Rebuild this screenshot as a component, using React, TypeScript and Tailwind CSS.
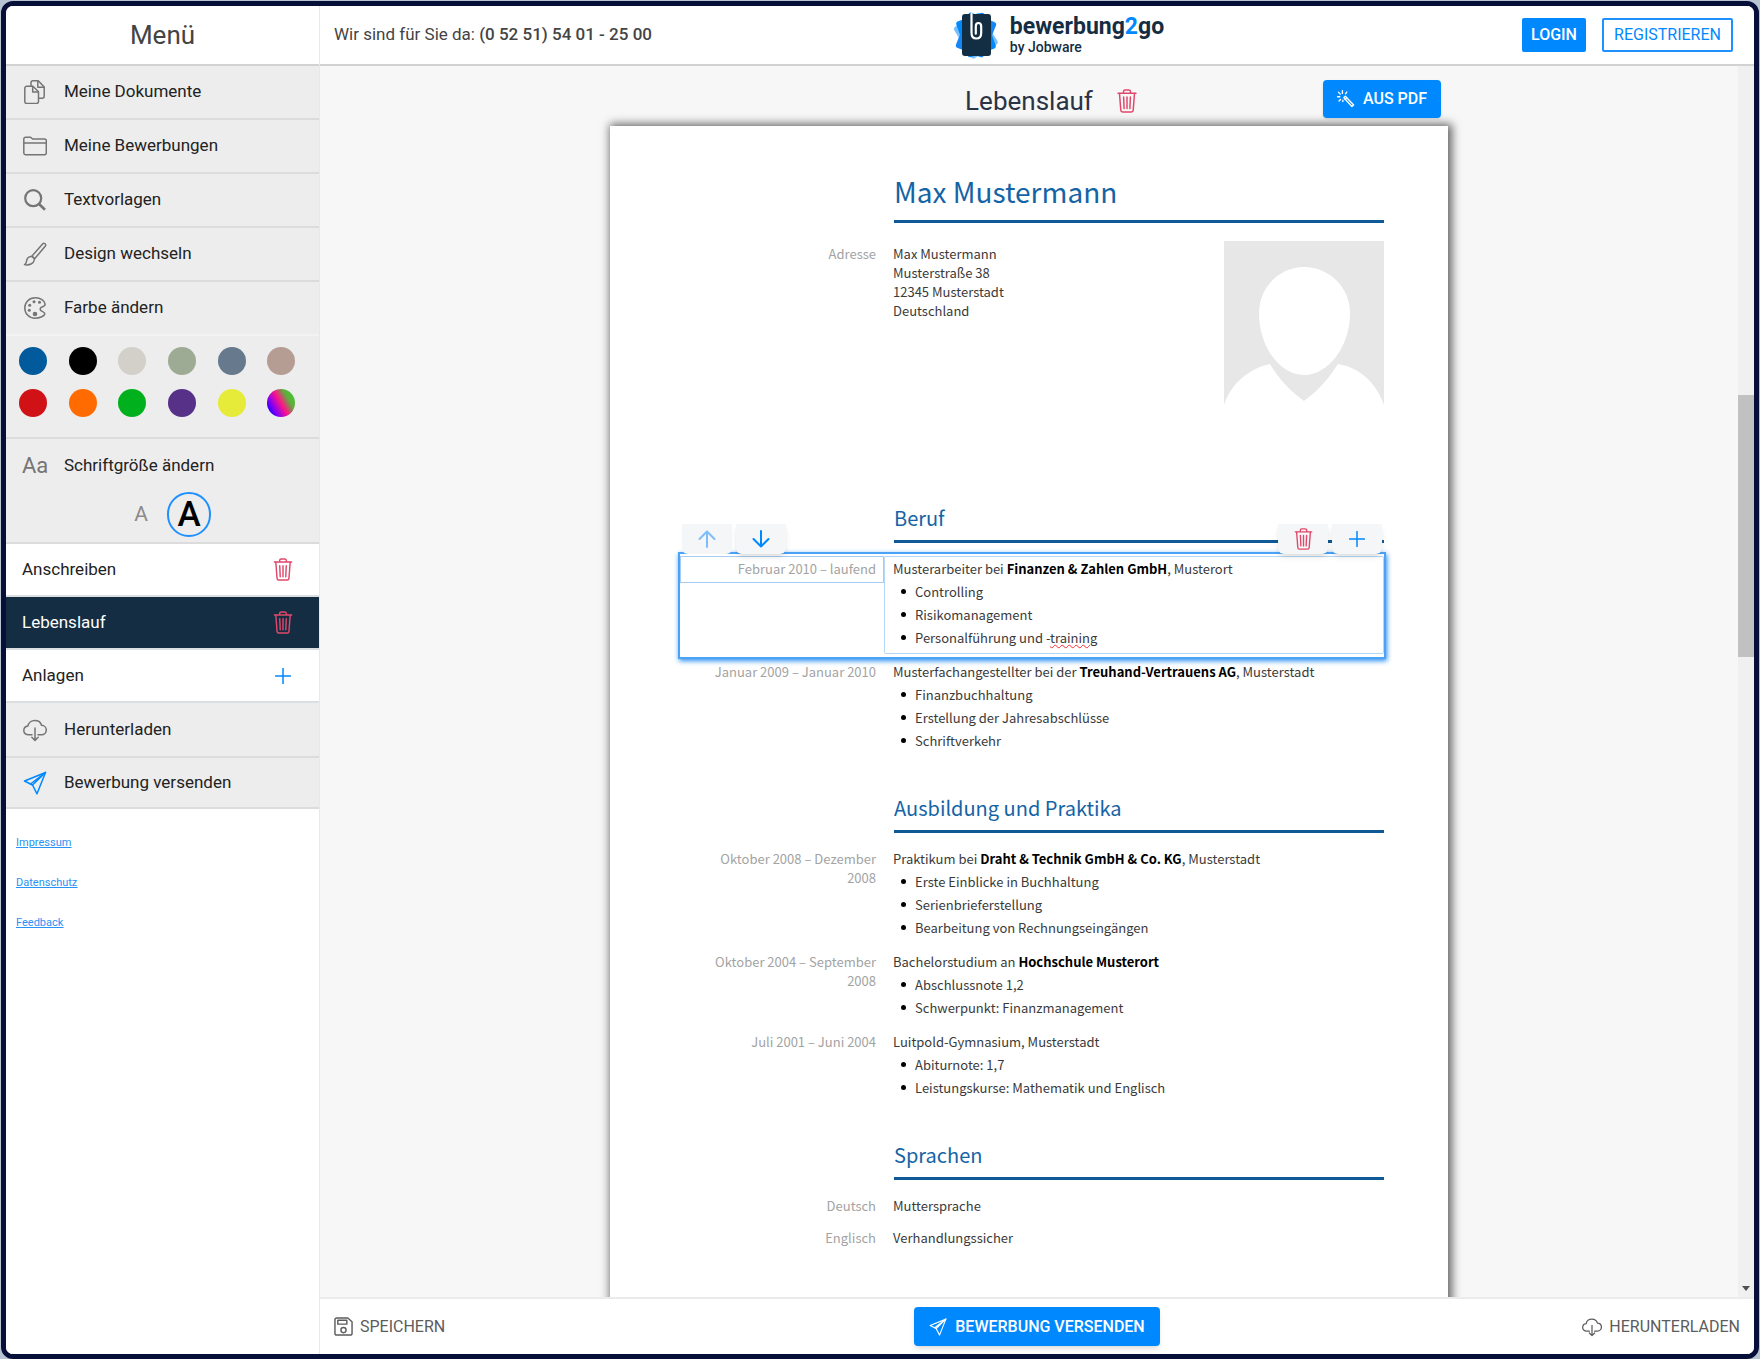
import type { ReactNode } from "react";

type IconProps = { className?: string };

function Icon({
  className = "",
  viewBox = "0 0 24 24",
  children,
}: IconProps & { viewBox?: string; children: ReactNode }) {
  return (
    <svg
      className={`shrink-0 ${className}`}
      viewBox={viewBox}
      fill="none"
      stroke="currentColor"
      strokeWidth="1.5"
      strokeLinecap="round"
      strokeLinejoin="round"
      aria-hidden="true"
    >
      {children}
    </svg>
  );
}

const DocumentsIcon = ({ className }: IconProps) => (
  <Icon className={className}>
    <path d="M3.8 6.2h6.1l5.6 5.6v9.7a2 2 0 0 1-2 2H3.8a2 2 0 0 1-2-2V8.200a2 2 0 0 1 2-2z" />
    <path d="M9.700 6.400v5.600h5.600" />
    <path d="M8 5.800V2.800a2 2 0 0 1 2-2h5.200l6 6.200v9.300a2 2 0 0 1-2 2h-3.500" />
    <path d="M14.800 1v6.200h6.200" />
  </Icon>
);

const FolderIcon = ({ className }: IconProps) => (
  <Icon className={className}>
    <path d="M.8 5a1.800 1.800 0 0 1 1.800-1.800h5l2 1.800h12a1.700 1.700 0 0 1 1.700 1.700v12.200a1.800 1.800 0 0 1-1.800 1.800h-19A1.800 1.800 0 0 1 .8 19z" />
    <path d="M1 9h22" />
  </Icon>
);

const SearchIcon = ({ className }: IconProps) => (
  <Icon className={className}>
    <circle cx="10.200" cy="10.200" r="8" strokeWidth="2.200" />
    <path d="M16 16l6 5.800" strokeWidth="2.600" strokeLinecap="butt" />
  </Icon>
);

const BrushIcon = ({ className }: IconProps) => (
  <Icon className={className}>
    <path d="M8.800 14.200L19.800 1.700c1.500-1.200 3.600.5 2.600 2.300L11.600 16.800z" />
    <path d="M8.600 14.600c1.600.2 3 1.700 2.700 3.400-.5 3.400-5 5.800-9.800 4.600 1.900-.8 1.800-2.400 2.300-4.700.5-2.100 2.700-3.600 4.800-3.300z" />
  </Icon>
);

const PaletteIcon = ({ className }: IconProps) => (
  <Icon className={className}>
    <path d="M12.500 1.800C6 1.800 1.800 6.300 1.800 12c0 5.800 4.400 10.200 10.200 10.200 4.200 0 9.200-1.800 9.800-4.200.4-2.600-4.600-2-4.700-4.900-.1-3.100 5.300-1.700 5-5-.4-3.600-4.700-6.300-9.600-6.300z" />
    <g fill="currentColor" stroke="none">
      <circle cx="11" cy="5.800" r="1.500" />
      <circle cx="16.500" cy="6.300" r="1.500" />
      <circle cx="6.700" cy="9.300" r="1.500" />
      <circle cx="6.300" cy="14.300" r="1.500" />
      <circle cx="12" cy="18" r="2.300" />
    </g>
  </Icon>
);

const CloudIcon = ({ className }: IconProps) => (
  <Icon className={className}>
    <path d="M9 16.800H5.400C2.800 16.800.8 15 .8 12.500S2.600 8.300 5 8c.4-3.200 3.300-5.600 6.800-5.600 3.300 0 6 2 6.700 4.900 2.700.1 4.800 2 4.800 4.700 0 2.700-2.100 4.800-4.800 4.800H15" />
    <path d="M12 10v12M8.800 19.200l3.200 3.200 3.200-3.200" />
  </Icon>
);

const PlaneIcon = ({ className }: IconProps) => (
  <Icon className={className}>
    <path d="M22.500 1.500L1.500 10l8 4 4.500 8.800z" />
    <path d="M22.500 1.500L9.500 14M22.500 1.500L7.500 13" />
  </Icon>
);

const TrashIcon = ({ className }: IconProps) => (
  <Icon className={className} viewBox="0 0 20 24">
    <path d="M1 4.200h18M6.500 4V2.600A1.600 1.600 0 0 1 8.100 1h3.800a1.600 1.600 0 0 1 1.600 1.600V4" />
    <path d="M2.500 4.500l1.300 16.800A1.800 1.800 0 0 0 5.600 23h8.800a1.800 1.800 0 0 0 1.800-1.700l1.300-16.800" />
    <path d="M6.600 8l.5 11.500M10 8v11.500M13.400 8l-.5 11.500" />
  </Icon>
);

const PlusIcon = ({ className }: IconProps) => (
  <Icon className={className} viewBox="0 0 16 16">
    <path d="M8 .5v15M.5 8h15" />
  </Icon>
);

const SaveIcon = ({ className }: IconProps) => (
  <Icon className={className} viewBox="0 0 20 20">
    <path d="M3 1h11.500L19 5v12a2 2 0 0 1-2 2H3a2 2 0 0 1-2-2V3a2 2 0 0 1 2-2z" />
    <path d="M4 3.500h9.500v4H4z" />
    <circle cx="10" cy="13.800" r="2.700" />
  </Icon>
);

const WandIcon = ({ className }: IconProps) => (
  <Icon className={className} viewBox="0 0 20 20">
    <path d="M7.500 8.500l1.800-1.600 9.200 9.800-1.900 1.700z" />
    <path d="M9 10.500l1.800-1.600M6 .8v3M1.800 2.600l1.800 2M.5 7.500h2.600M2.300 12.200l1.600-1.700M6.500 12.800v-1.500M10.800 2.300L9.500 4.200" />
  </Icon>
);

const ArrowIcon = ({ className }: IconProps) => (
  <Icon className={className} viewBox="0 0 18 18">
    <path d="M9 17V1.500M1.500 9L9 1.500 16.500 9" strokeWidth="2" />
  </Icon>
);

const LogoMark = () => (
  <svg className="h-12 w-12 shrink-0" viewBox="0 0 48 48" aria-hidden="true">
    <rect x="7" y="6" width="31" height="37" rx="3" fill="#7cc0fa" transform="rotate(-32 23 24)" />
    <rect x="8" y="5" width="30" height="38" rx="3" fill="#1486f5" transform="rotate(22 23 24)" />
    <rect x="8" y="5" width="30" height="38" rx="3" fill="#0088ff" transform="rotate(-20 23 24)" />
    <rect x="9" y="3" width="29" height="42" rx="3" fill="#132d42" />
    <path
      d="M18.500 3v18.500c0 3.300 1.500 6 4.700 6s5-2.400 5-5.600v-6.500c0-2.200-1.100-3.400-2.700-3.400s-2.700 1.200-2.700 3.200v7.500"
      fill="none"
      stroke="#fff"
      strokeWidth="2.200"
      strokeLinecap="round"
    />
  </svg>
);

const mainItems = [
  { label: "Meine Dokumente", icon: DocumentsIcon },
  { label: "Meine Bewerbungen", icon: FolderIcon },
  { label: "Textvorlagen", icon: SearchIcon },
  { label: "Design wechseln", icon: BrushIcon },
];

const colors = [
  { name: "Blau", bg: "bg-[#005a9c]" },
  { name: "Schwarz", bg: "bg-black" },
  { name: "Hellgrau", bg: "bg-[#d3cfc9]" },
  { name: "Salbei", bg: "bg-[#9dab94]" },
  { name: "Schiefer", bg: "bg-[#66798d]" },
  { name: "Altrosa", bg: "bg-[#b59d94]" },
  { name: "Rot", bg: "bg-[#d01217]" },
  { name: "Orange", bg: "bg-[#ff6b00]" },
  { name: "Grün", bg: "bg-[#00b01c]" },
  { name: "Violett", bg: "bg-[#573087]" },
  { name: "Gelb", bg: "bg-[#e6ea38]" },
  {
    name: "Eigene Farbe",
    bg: "bg-[linear-gradient(60deg,#1a00ff_10%,#8a00f0_28%,#ff1585_50%,#5fae3c_72%,#3fd02f_95%)]",
  },
];

const documents = [
  { label: "Anschreiben", active: false, add: false },
  { label: "Lebenslauf", active: true, add: false },
  { label: "Anlagen", active: false, add: true },
];

function Sidebar() {
  return (
    <aside className="flex w-[314px] shrink-0 flex-col border-r border-[#e8e8e8] bg-white text-[#222]">
      <h1 className="flex h-[60px] shrink-0 items-center justify-center border-b-2 border-[#d2d2d2] text-[26px] text-[#444]">
        Menü
      </h1>

      <nav aria-label="Menü" className="text-[17px]">
        <div className="bg-[#ededed]">
          {mainItems.map(({ label, icon: ItemIcon }) => (
            <button
              key={label}
              className="flex h-[54px] w-full items-center border-b-2 border-[#dcdcdc] pl-[17px] text-left"
            >
              <ItemIcon className="h-6 w-6 text-[#757575]" />
              <span className="ml-[17px]">{label}</span>
            </button>
          ))}

          {/* Farben */}
          <button className="flex h-[54px] w-full items-center border-b-2 border-[#f3f3f3] pl-[17px] text-left">
            <PaletteIcon className="h-6 w-6 text-[#757575]" />
            <span className="ml-[17px]">Farbe ändern</span>
          </button>
          <div className="grid h-[103px] grid-cols-6 content-start gap-y-[14px] border-b-2 border-[#dcdcdc] pt-[11px] pr-[13px] pl-[2px]">
            {colors.map((c) => (
              <button
                key={c.name}
                aria-label={c.name}
                className={`ml-[11px] h-7 w-7 rounded-full ${c.bg}`}
              />
            ))}
          </div>

          {/* Schriftgröße */}
          <div className="h-[105px] border-b-2 border-[#dcdcdc]">
            <button className="flex h-[53px] w-full items-center pl-4 text-left">
              <span className="w-7 text-[22px] text-[#757575]">Aa</span>
              <span className="ml-[14px]">Schriftgröße ändern</span>
            </button>
            <div className="flex items-center gap-4 pl-[125px]">
              <button
                aria-label="Kleine Schrift"
                className="w-5 text-[21px] text-[#8a8a8a]"
              >
                A
              </button>
              <button
                aria-label="Große Schrift"
                className="h-[45px] w-11 rounded-full border-2 border-[#1e90ff] text-[35px] leading-10 font-medium text-black"
              >
                A
              </button>
            </div>
          </div>
        </div>

        {/* Dokumente */}
        {documents.map((d) => (
          <div
            key={d.label}
            className={`flex h-[53px] items-center border-b-2 border-[#dcdfe2] pr-[26px] pl-4 ${
              d.active ? "bg-[#152d42] text-white" : "bg-white"
            }`}
          >
            <button className="h-full flex-1 text-left">{d.label}</button>
            <button
              aria-label={d.add ? "Anlage hinzufügen" : `${d.label} löschen`}
              className="flex w-5 justify-center"
            >
              {d.add ? (
                <PlusIcon className="h-4 w-4 text-[#0088ff]" />
              ) : (
                <TrashIcon className="h-[23px] w-5 text-[#e0486b]" />
              )}
            </button>
          </div>
        ))}

        <button className="flex h-[55px] w-full items-center border-b-2 border-[#dcdcdc] bg-[#ededed] pl-[17px] text-left">
          <CloudIcon className="h-6 w-6 text-[#757575]" />
          <span className="ml-[17px]">Herunterladen</span>
        </button>
        <button className="flex h-[51px] w-full items-center border-b-2 border-[#dcdcdc] bg-[#ededed] pl-[17px] text-left">
          <PlaneIcon className="h-6 w-6 text-[#0088ff]" />
          <span className="ml-[17px]">Bewerbung versenden</span>
        </button>
      </nav>

      <footer className="flex flex-col items-start gap-6 pt-[26px] pl-[10px] text-[11px] leading-4 text-[#2a92f5] underline">
        <a href="#impressum">Impressum</a>
        <a href="#datenschutz">Datenschutz</a>
        <a href="#feedback">Feedback</a>
      </footer>
    </aside>
  );
}

function Topbar() {
  return (
    <header className="z-10 flex h-[60px] shrink-0 items-center border-b-2 border-[#d2d2d2] bg-white pr-[21px] pl-[14px]">
      <p className="flex-1 text-[17px] text-[#444]">
        Wir sind für Sie da:{" "}
        <span className="font-medium">(0 52 51) 54 01 - 25 00</span>
      </p>
      <div className="flex items-center gap-[9px] pl-[50px]">
        <LogoMark />
        <div className="font-medium text-[#152d42]">
          <p className="text-[23px] leading-6 font-bold">
            bewerbung<span className="text-[#0088ff]">2</span>go
          </p>
          <p className="text-[14px] leading-4">by Jobware</p>
        </div>
      </div>
      <div className="flex flex-1 justify-end gap-4 text-[16px]">
        <button className="h-[34px] w-16 rounded-xs bg-[#0088ff] font-medium text-white">
          LOGIN
        </button>
        <button className="h-[34px] w-[131px] rounded-xs border-2 border-[#1e90ff] text-[#0088ff]">
          REGISTRIEREN
        </button>
      </div>
    </header>
  );
}

type EntryProps = {
  label: string;
  children: ReactNode;
  bullets?: ReactNode[];
  active?: boolean;
};

function EntryTools() {
  const tool =
    "flex h-[30px] w-[50px] items-center justify-center rounded-b-md bg-[#f5f6f7]";
  return (
    <div className="absolute inset-x-0 bottom-full flex gap-1 px-[2px]">
      <button aria-label="Nach oben" className={tool}>
        <ArrowIcon className="h-[18px] w-[18px] text-[#7dbdfb]" />
      </button>
      <button aria-label="Nach unten" className={`${tool} shadow-md`}>
        <ArrowIcon className="h-[18px] w-[18px] rotate-180 text-[#0088ff]" />
      </button>
      <button aria-label="Eintrag löschen" className={`${tool} ml-auto shadow-md`}>
        <TrashIcon className="h-[22px] w-[19px] text-[#e0486b]" />
      </button>
      <button aria-label="Eintrag hinzufügen" className={`${tool} shadow-md`}>
        <PlusIcon className="h-4 w-4 text-[#0088ff]" />
      </button>
    </div>
  );
}

function Entry({ label, children, bullets, active = false }: EntryProps) {
  return (
    <div
      className={`relative flex items-start pt-[2px] pb-[3px] ${
        active ? "shadow-[0_0_0_2px_#4ba3f7,1px_2px_5px_2px_#2d8ff0]" : ""
      }`}
    >
      {active && <EntryTools />}
      <div
        className={`w-[204px] shrink-0 pt-[3px] pr-2 pb-[5px] pl-4 text-right text-[#a3a3a3] ${
          active ? "ring-1 ring-[#a6cdf0] ring-inset" : ""
        }`}
      >
        {label}
      </div>
      <div
        className={`min-w-0 flex-1 pt-[3px] pb-[5px] pl-[9px] ${
          active ? "rounded-xs ring-1 ring-[#b4d8f5] ring-inset" : ""
        }`}
      >
        <p>{children}</p>
        {bullets && (
          <ul className="mt-[2px] pl-2 leading-[23px]">
            {bullets.map((b, i) => (
              <li key={i} className="flex items-center gap-[9px]">
                <span className="h-[5px] w-[5px] rounded-full bg-black" />
                <span>{b}</span>
              </li>
            ))}
          </ul>
        )}
      </div>
    </div>
  );
}

function Section({ title, children }: { title: string; children: ReactNode }) {
  return (
    <section>
      <h3 className="mb-[11px] ml-[214px] border-b-3 border-[#0f5a96] pt-[34px] pb-2 text-[20px] leading-7 text-[#1464a5]">
        {title}
      </h3>
      {children}
    </section>
  );
}

function Portrait() {
  return (
    <svg
      className="mt-[2px] h-[164px] w-[160px] shrink-0"
      viewBox="0 0 160 164"
      preserveAspectRatio="none"
      role="img"
      aria-label="Bewerbungsfoto"
    >
      <path
        d="M0 0h160v164c-7-20-22-37-46-41-9 14-18 25-34 37-15-11-25-22-34-37-22 5-39 20-46 41z"
        fill="#e7e7e7"
      />
      <path
        d="M80 26c26 0 46 21 46 46 0 34-22 62-46 62S35 106 35 72c0-25 20-46 45-46z"
        fill="#fff"
      />
    </svg>
  );
}

function Resume() {
  return (
    <article className="mx-auto w-full max-w-[838px] bg-white pr-16 pb-20 pl-[70px] font-['Noto_Sans_CJK_JP','Open_Sans',sans-serif] text-[13px] leading-[19px] text-[#3a3a3a] shadow-[2px_0_9px_2px_rgba(0,0,0,0.6)]">
      <h2 className="mb-4 ml-[214px] border-b-3 border-[#0f5a96] pt-[45px] pb-[9px] text-[28px] leading-10 text-[#1464a5]">
        Max Mustermann
      </h2>
      <div className="flex h-[231px] items-start">
        <div className="flex-1">
          <Entry label="Adresse">
            Max Mustermann
            <br />
            Musterstraße 38
            <br />
            12345 Musterstadt
            <br />
            Deutschland
          </Entry>
        </div>
        <Portrait />
      </div>

      <Section title="Beruf">
        <Entry
          active
          label="Februar 2010 – laufend"
          bullets={[
            "Controlling",
            "Risikomanagement",
            <>
              Personalführung und -
              <span className="underline decoration-red-500 decoration-wavy decoration-1">
                training
              </span>
            </>,
          ]}
        >
          Musterarbeiter bei{" "}
          <b className="text-black">Finanzen &amp; Zahlen GmbH</b>, Musterort
        </Entry>
        <Entry
          label="Januar 2009 – Januar 2010"
          bullets={[
            "Finanzbuchhaltung",
            "Erstellung der Jahresabschlüsse",
            "Schriftverkehr",
          ]}
        >
          Musterfachangestellter bei der{" "}
          <b className="text-black">Treuhand-Vertrauens AG</b>, Musterstadt
        </Entry>
      </Section>

      <Section title="Ausbildung und Praktika">
        <Entry
          label="Oktober 2008 – Dezember 2008"
          bullets={[
            "Erste Einblicke in Buchhaltung",
            "Serienbrieferstellung",
            "Bearbeitung von Rechnungseingängen",
          ]}
        >
          Praktikum bei{" "}
          <b className="text-black">Draht &amp; Technik GmbH &amp; Co. KG</b>,
          Musterstadt
        </Entry>
        <Entry
          label="Oktober 2004 – September 2008"
          bullets={["Abschlussnote 1,2", "Schwerpunkt: Finanzmanagement"]}
        >
          Bachelorstudium an <b className="text-black">Hochschule Musterort</b>
        </Entry>
        <Entry
          label="Juli 2001 – Juni 2004"
          bullets={["Abiturnote: 1,7", "Leistungskurse: Mathematik und Englisch"]}
        >
          Luitpold-Gymnasium, Musterstadt
        </Entry>
      </Section>

      <Section title="Sprachen">
        <Entry label="Deutsch">Muttersprache</Entry>
        <Entry label="Englisch">Verhandlungssicher</Entry>
      </Section>
    </article>
  );
}

function Scrollbar() {
  return (
    <div className="flex w-4 shrink-0 flex-col items-center bg-[#f0f0f0]" aria-hidden="true">
      <div className="mt-[329px] h-[262px] w-full bg-[#c1c1c1]" />
      <svg className="mt-auto mb-1 h-2 w-2" viewBox="0 0 8 8">
        <path d="M0 1h8L4 6z" fill="#505050" />
      </svg>
    </div>
  );
}

function ActionBar() {
  return (
    <footer className="grid h-[57px] shrink-0 grid-cols-3 items-center border-t-2 border-[#ebebeb] bg-white px-[14px] text-[16px] text-[#5c5c5c]">
      <button className="flex items-center gap-[7px] justify-self-start">
        <SaveIcon className="h-[19px] w-[19px]" />
        SPEICHERN
      </button>
      <button className="flex h-[39px] w-[246px] items-center justify-center gap-2 justify-self-center rounded-sm bg-[#0088ff] font-medium text-white shadow-md">
        <PlaneIcon className="h-[18px] w-[18px]" />
        BEWERBUNG VERSENDEN
      </button>
      <button className="flex items-center gap-[7px] justify-self-end">
        <CloudIcon className="h-5 w-5" />
        HERUNTERLADEN
      </button>
    </footer>
  );
}

export default function App() {
  return (
    <div className="h-screen bg-[#b9c4d3] px-px pt-px font-[Roboto,sans-serif]">
      <div className="flex h-full overflow-hidden rounded-xl border-5 border-[#050f38] bg-white">
        <Sidebar />
        <div className="flex min-w-0 flex-1 flex-col">
          <Topbar />
          <div className="flex min-h-0 flex-1">
            <main className="min-w-0 flex-1 overflow-hidden bg-[#f7f7f7]">
              <div className="mx-auto flex h-[60px] max-w-[838px] items-start pt-[14px] pr-[7px]">
                <div className="flex-1" />
                <div className="flex h-[42px] items-center gap-6 pl-[51px]">
                  <h2 className="text-[26px] text-[#2b3346]">Lebenslauf</h2>
                  <button aria-label="Lebenslauf löschen">
                    <TrashIcon className="h-6 w-5 text-[#e0486b]" />
                  </button>
                </div>
                <div className="flex flex-1 justify-end">
                  <button className="flex h-[38px] w-[118px] items-center justify-center gap-2 rounded-sm bg-[#0088ff] text-[16px] font-medium text-white shadow">
                    <WandIcon className="h-[18px] w-[18px]" />
                    AUS PDF
                  </button>
                </div>
              </div>
              <Resume />
            </main>
            <Scrollbar />
          </div>
          <ActionBar />
        </div>
      </div>
    </div>
  );
}
